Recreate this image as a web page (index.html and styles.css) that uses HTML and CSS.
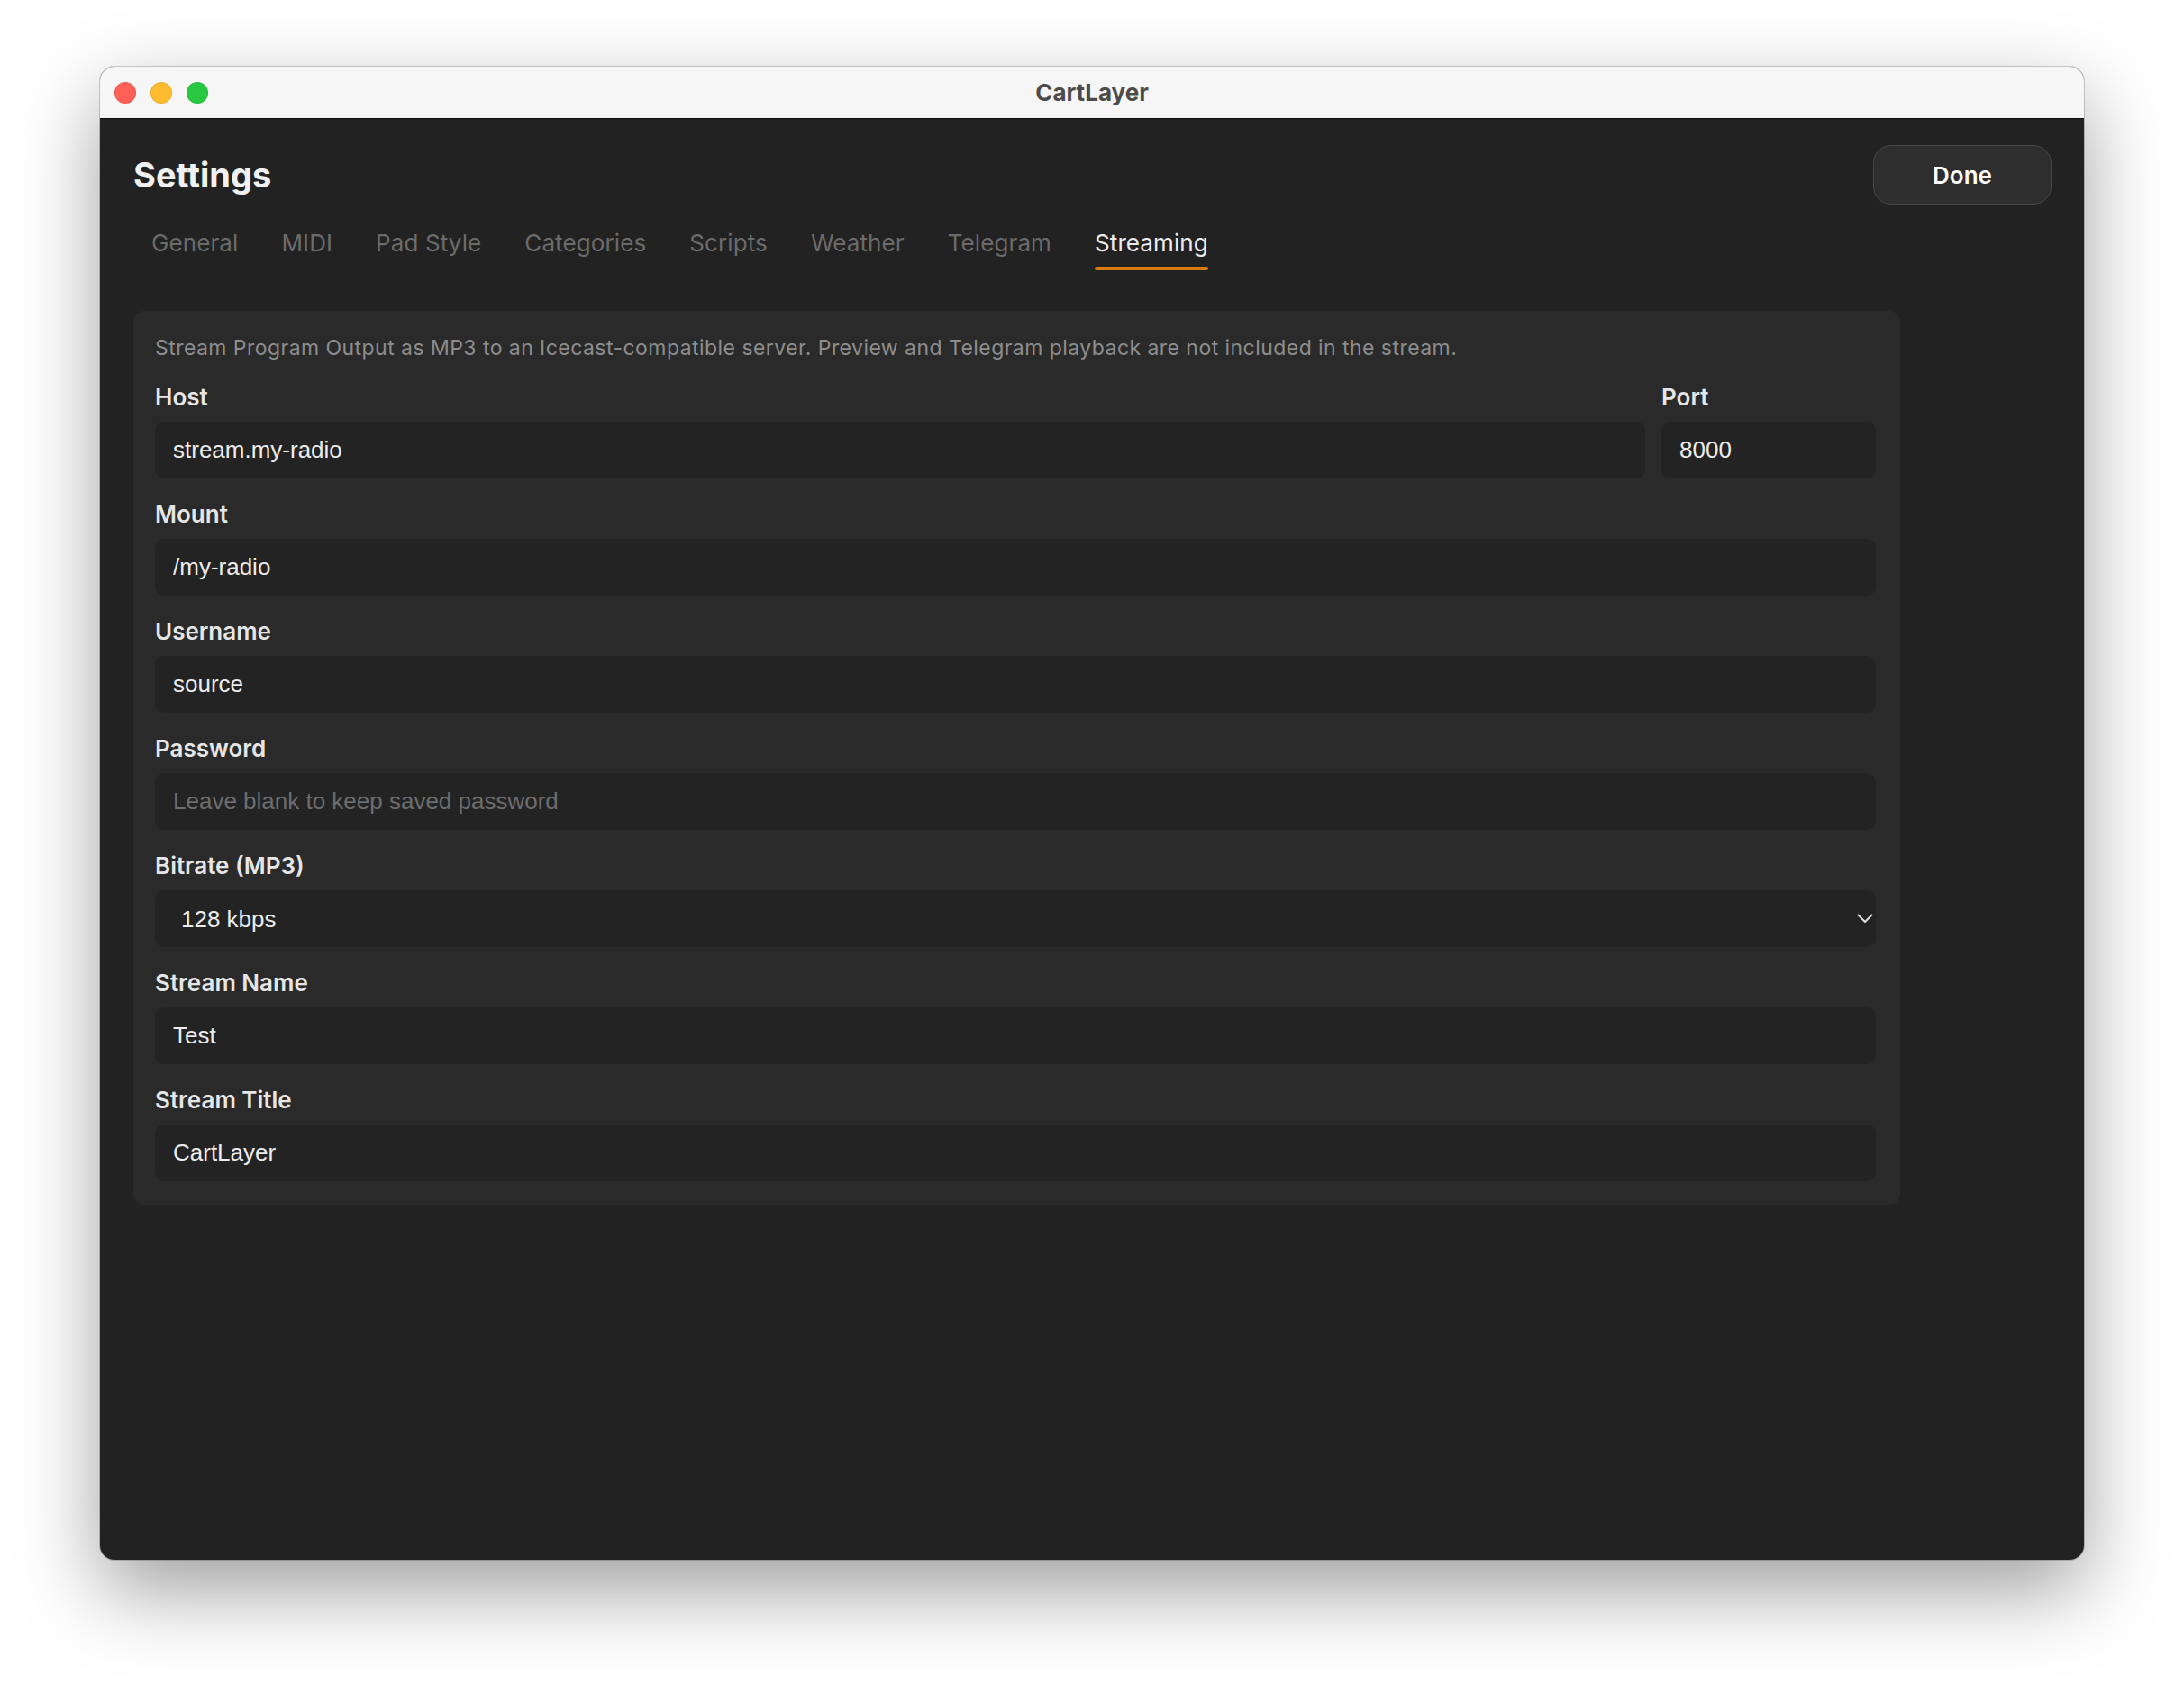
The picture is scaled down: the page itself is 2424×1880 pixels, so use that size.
FILE: index.html
```html
<!DOCTYPE html>
<html>
<head>
    <title>CartLayer</title>
    <link rel="stylesheet" href="styles.css">
</head>
<body>
    <div class="window">
        <div class="titlebar">
            <div class="lights">
                <span class="light red"></span>
                <span class="light yellow"></span>
                <span class="light green"></span>
            </div>
            <div class="window-title">CartLayer</div>
            <div></div>
        </div>

        <div class="content">
            <div class="header">
                <h1>Settings</h1>
                <button class="done" type="button">Done</button>
            </div>

            <nav class="tabs">
                <span class="tab">General</span>
                <span class="tab">MIDI</span>
                <span class="tab">Pad Style</span>
                <span class="tab">Categories</span>
                <span class="tab">Scripts</span>
                <span class="tab">Weather</span>
                <span class="tab">Telegram</span>
                <span class="tab active">Streaming</span>
            </nav>

            <div class="panel">
                <p class="hint">Stream Program Output as MP3 to an Icecast-compatible server. Preview and Telegram playback are not included in the stream.</p>

                <div class="row">
                    <div class="field grow">
                        <label for="host">Host</label>
                        <input id="host" type="text" value="stream.my-radio">
                    </div>
                    <div class="field port">
                        <label for="port">Port</label>
                        <input id="port" type="text" value="8000">
                    </div>
                </div>

                <div class="field">
                    <label for="mount">Mount</label>
                    <input id="mount" type="text" value="/my-radio">
                </div>

                <div class="field">
                    <label for="username">Username</label>
                    <input id="username" type="text" value="source">
                </div>

                <div class="field">
                    <label for="password">Password</label>
                    <input id="password" type="password" placeholder="Leave blank to keep saved password">
                </div>

                <div class="field">
                    <label for="bitrate">Bitrate (MP3)</label>
                    <div class="select-wrap">
                        <select id="bitrate">
                            <option>128 kbps</option>
                        </select>
                        <svg class="chevron" width="18" height="11" viewBox="0 0 18 11">
                            <path d="M1.5 1.5 L9 9 L16.5 1.5" fill="none" stroke="#e0e0e0" stroke-width="2" stroke-linecap="round" stroke-linejoin="round"/>
                        </svg>
                    </div>
                </div>

                <div class="field">
                    <label for="stream-name">Stream Name</label>
                    <input id="stream-name" type="text" value="Test">
                </div>

                <div class="field">
                    <label for="stream-title">Stream Title</label>
                    <input id="stream-title" type="text" value="CartLayer">
                </div>
            </div>
        </div>
    </div>
</body>
</html>
```

FILE: styles.css
```css
html {
    background-color: #ffffff;
}

body {
    margin: 0;
    min-height: 100vh;
    box-sizing: border-box;
    padding: 74px 0 0 111px;
    font-family: Inter, "Noto Sans", sans-serif;
}

.window {
    width: 2202px;
    height: 1657px;
    border-radius: 16px;
    overflow: hidden;
    background-color: #222222;
    box-shadow: 0 34px 90px rgba(0, 0, 0, 0.38), 0 0 0 1px rgba(0, 0, 0, 0.18);
    display: flex;
    flex-direction: column;
}

/* barre de titre façon macOS */

.titlebar {
    height: 57px;
    flex-shrink: 0;
    background-color: #f6f6f6;
    border-bottom: 1px solid #0c0c0c;
    display: grid;
    grid-template-columns: 1fr auto 1fr;
    align-items: center;
}

.lights {
    display: flex;
    gap: 16px;
    padding-left: 16px;
}

.light {
    width: 24px;
    height: 24px;
    border-radius: 50%;
    box-sizing: border-box;
    border: 1px solid rgba(0, 0, 0, 0.08);
}

.light.red {
    background-color: #fe5f57;
}

.light.yellow {
    background-color: #febc2e;
}

.light.green {
    background-color: #28c840;
}

.window-title {
    font-size: 26px;
    font-weight: 700;
    color: #4b4b4b;
}

/* contenu */

.content {
    padding: 29px 36px 0 37px;
}

.header {
    display: flex;
    justify-content: space-between;
    align-items: center;
}

.header h1 {
    margin: 0;
    font-size: 38px;
    font-weight: 700;
    color: #f1f1f1;
}

.done {
    width: 198px;
    height: 66px;
    border-radius: 20px;
    background-color: #2e2e2e;
    border: 1px solid #474747;
    color: #ffffff;
    font-family: inherit;
    font-size: 26px;
    font-weight: 600;
    cursor: pointer;
}

.tabs {
    display: flex;
    gap: 48px;
    padding-left: 20px;
    margin-top: 27px;
}

.tab {
    font-size: 26px;
    line-height: 32px;
    letter-spacing: 0.1px;
    color: #6b6b6b;
}

.tab::after {
    content: "";
    display: block;
    height: 4px;
    margin-top: 10px;
    border-radius: 3px;
}

.tab.active {
    color: #ececec;
}

.tab.active::after {
    background-color: #d97b12;
}

.panel {
    margin-top: 45px;
    width: 1961px;
    box-sizing: border-box;
    padding: 26px 27px 26px 24px;
    background-color: #2a2a2a;
    border-radius: 12px;
    display: flex;
    flex-direction: column;
    gap: 25px;
}

.hint {
    margin: 0;
    font-size: 23px;
    line-height: 30px;
    letter-spacing: 0.45px;
    color: #8d8d8d;
}

.row {
    display: flex;
    gap: 18px;
}

.field {
    display: flex;
    flex-direction: column;
    gap: 12px;
}

.field.grow {
    flex: 1;
}

.field.port {
    width: 238px;
}

.field label {
    font-size: 26px;
    font-weight: 600;
    line-height: 30px;
    color: #e6e6e6;
}

.field input,
.field select {
    height: 63px;
    box-sizing: border-box;
    width: 100%;
    background-color: #232323;
    border: none;
    border-radius: 10px;
    padding: 0 20px;
    font-family: "Liberation Sans", Arial, sans-serif;
    font-size: 26px;
    color: #ececec;
    outline: none;
}

.field input::placeholder {
    color: #6d6d6d;
}

.select-wrap {
    position: relative;
}

.field select {
    appearance: none;
    -webkit-appearance: none;
    padding-left: 29px;
}

.chevron {
    position: absolute;
    right: 3px;
    top: 26px;
    pointer-events: none;
}
```
